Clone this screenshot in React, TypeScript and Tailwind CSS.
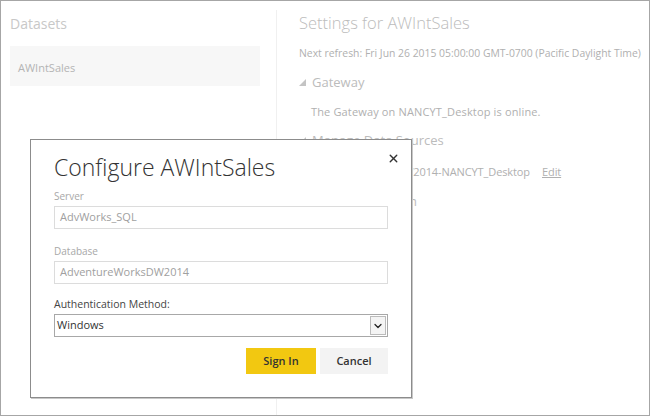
import { X, ChevronDown } from "lucide-react";

const font = { fontFamily: '"Open Sans", "Noto Sans", sans-serif' };

function Triangle() {
  return (
    <svg width="7" height="7" viewBox="0 0 7 7" className="mr-[6px] shrink-0">
      <polygon points="7,0 7,7 0,7" fill="#c4c4c4" />
    </svg>
  );
}

function Field({ label, value, mb }: { label: string; value: string; mb: string }) {
  return (
    <div className={mb}>
      <div className="mb-[3px] text-[10px] leading-[14px] text-[#a8a8a8]">{label}</div>
      <div className="flex h-[23px] items-center border border-[#dcdcdc] px-[5px] text-[11px] text-[#a0a0a0]">
        {value}
      </div>
    </div>
  );
}

export default function App() {
  return (
    <div
      style={font}
      className="relative flex h-[416px] w-[650px] overflow-hidden border border-[#a6a6a6] bg-white"
    >
      {/* datasets column */}
      <div className="w-[275px] shrink-0 pl-[9px] pr-[16px] pt-[14px]">
        <h2 className="text-[14px] leading-[18px] text-[#c8c8c8]">Datasets</h2>
        <div className="mt-[13px] flex h-[40px] items-center bg-[#f7f7f7] px-[8px] pt-[4px] text-[11px] text-[#b4b4b4]">
          AWIntSales
        </div>
      </div>

      <div className="mt-[9px] w-px bg-[#f0f0f0]" />

      {/* settings column */}
      <div className="flex-1 pl-[22px] pt-[10px] text-[#b0b0b0]">
        <h1 className="text-[16.5px] font-light leading-[24px] text-[#bcbcbc]">
          Settings for AWIntSales
        </h1>
        <p className="mt-[11px] text-[10.4px] leading-[14px] whitespace-nowrap">
          Next refresh: Fri Jun 26 2015 05:00:00 GMT-0700 (Pacific Daylight Time)
        </p>

        <div className="mt-[12px] flex items-center text-[13px] leading-[20px] text-[#bcbcbc]">
          <Triangle />
          Gateway
        </div>
        <p className="mt-[13px] pl-[12px] text-[11px] leading-[14px] tracking-[0.15px]">
          The Gateway on NANCYT_Desktop is online.
        </p>

        <div className="mt-[11px] flex items-center text-[13px] leading-[20px] text-[#bcbcbc]">
          <Triangle />
          Manage Data Sources
        </div>
        <p className="mt-[15px] pl-[12px] text-[11px] leading-[14px] whitespace-nowrap tracking-[-0.1px]">
          AdventureWorksDW2014-NANCYT_Desktop
          <a href="#" className="ml-[12px] underline">
            Edit
          </a>
        </p>

        <div className="mt-[12px] flex items-center text-[13px] leading-[20px] text-[#bcbcbc]">
          <Triangle />
          Schedule Refresh
        </div>
      </div>

      {/* configure dialog */}
      <div className="absolute left-[29px] top-[138px] w-[382px] border border-[#8c8c8c] bg-white px-[23px] pb-[23px] pt-[10px] shadow-[1px_1px_0_#c8c8c8]">
        <button className="absolute right-[11px] top-[12px] text-[#333]">
          <X size={13} strokeWidth={2.5} />
        </button>
        <h3 className="text-[23px] font-light leading-[34px] text-[#333]">Configure AWIntSales</h3>

        <div className="mt-[5px]">
          <Field label="Server" value="AdvWorks_SQL" mb="mb-[15px]" />
          <Field label="Database" value="AdventureWorksDW2014" mb="mb-[13px]" />
        </div>

        <div className="mb-[3px] text-[10.5px] leading-[14px] text-[#444]">Authentication Method:</div>
        <div className="flex h-[23px] items-center border border-[#a8a8a8] pl-[2px] text-[11px] text-[#333]">
          <span className="flex-1">Windows</span>
          <span className="m-[1px] flex h-[19px] w-[16px] items-center justify-center border border-[#bbb] bg-[#f4f4f4]">
            <ChevronDown size={12} strokeWidth={2.5} className="text-[#222]" />
          </span>
        </div>

        <div className="mt-[11px] flex justify-end gap-[4px]">
          <button className="h-[26px] w-[70px] bg-[#f2c811] text-[11px] font-semibold text-[#333]">
            Sign In
          </button>
          <button className="h-[26px] w-[68px] bg-[#f3f3f3] text-[11px] font-semibold text-[#333]">
            Cancel
          </button>
        </div>
      </div>
    </div>
  );
}
